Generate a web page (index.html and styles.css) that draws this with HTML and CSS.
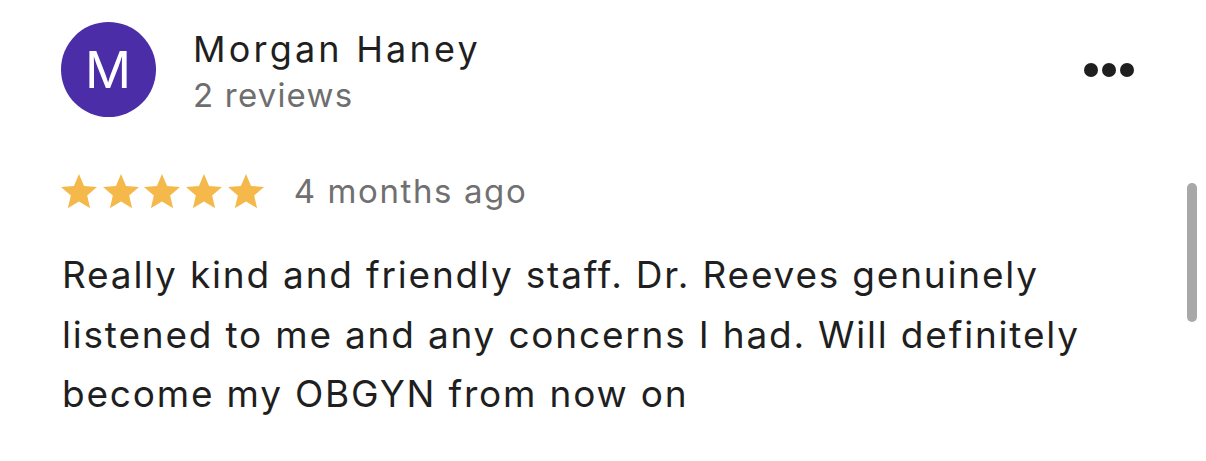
FILE: index.html
```html
<!DOCTYPE html>
<html lang="en">
<head>
  <meta charset="UTF-8" />
  <meta name="viewport" content="width=device-width, initial-scale=1.0"/>
  <title>Review</title>
  <link rel="stylesheet" href="styles.css">
</head>
<body>

  <div class="review">
    <div class="review-head">
      <div class="avatar">M</div>
      <div class="author">
        <div class="author-name">Morgan Haney</div>
        <div class="author-meta">2 reviews</div>
      </div>
      <button class="more" aria-label="More options">
        <span class="dot"></span>
        <span class="dot"></span>
        <span class="dot"></span>
      </button>
    </div>

    <div class="rating">
      <div class="stars">
        <svg class="star" viewBox="2 2 20 19"><path d="M12 17.27L18.18 21l-1.64-7.03L22 9.24l-7.19-.61L12 2 9.19 8.63 2 9.24l5.46 4.73L5.82 21z"/></svg>
        <svg class="star" viewBox="2 2 20 19"><path d="M12 17.27L18.18 21l-1.64-7.03L22 9.24l-7.19-.61L12 2 9.19 8.63 2 9.24l5.46 4.73L5.82 21z"/></svg>
        <svg class="star" viewBox="2 2 20 19"><path d="M12 17.27L18.18 21l-1.64-7.03L22 9.24l-7.19-.61L12 2 9.19 8.63 2 9.24l5.46 4.73L5.82 21z"/></svg>
        <svg class="star" viewBox="2 2 20 19"><path d="M12 17.27L18.18 21l-1.64-7.03L22 9.24l-7.19-.61L12 2 9.19 8.63 2 9.24l5.46 4.73L5.82 21z"/></svg>
        <svg class="star" viewBox="2 2 20 19"><path d="M12 17.27L18.18 21l-1.64-7.03L22 9.24l-7.19-.61L12 2 9.19 8.63 2 9.24l5.46 4.73L5.82 21z"/></svg>
      </div>
      <span class="date">4 months ago</span>
    </div>

    <p class="review-text">Really kind and friendly staff. Dr. Reeves genuinely listened to me and any concerns I had. Will definitely become my OBGYN from now on</p>

    <div class="scrollbar"></div>
  </div>

</body>
</html>
```

FILE: styles.css
```css
body {
  margin: 0px;
  padding: 0px;
  font-family: Inter, 'Liberation Sans', sans-serif;
  background: #ffffff;
  color: #1f1f1f;
}

.review {
  padding: 22px 72px 0 61px;
  height: 439px;
}

.review-head {
  display: flex;
  align-items: flex-start;
}

.avatar {
  width: 95px;
  height: 95px;
  border-radius: 50%;
  background: #4b2da7;
  color: #ffffff;
  font-size: 51px;
  letter-spacing: 1px;
  display: flex;
  align-items: center;
  justify-content: center;
  flex-shrink: 0;
}

.author {
  flex: 1;
  margin-left: 37px;
  padding-top: 5px;
}

.author-name {
  font-size: 36px;
  line-height: 44px;
  letter-spacing: 3.2px;
  color: #1f1f1f;
}

.author-meta {
  font-size: 33px;
  line-height: 48px;
  letter-spacing: 1.2px;
  color: #6e6e6e;
}

.more {
  display: flex;
  gap: 4px;
  margin-top: 41px;
  padding: 0;
  border: none;
  background: none;
  cursor: pointer;
}

.dot {
  width: 14px;
  height: 14px;
  border-radius: 50%;
  background: #1f1f1f;
}

.rating {
  display: flex;
  align-items: center;
  margin-top: 52px;
}

.stars {
  display: flex;
  gap: 5.7px;
}

.star {
  width: 36px;
  height: 34.2px;
  fill: #f4b94a;
}

.date {
  margin-left: 30px;
  font-size: 33px;
  line-height: 40px;
  letter-spacing: 1.6px;
  color: #707070;
}

.review-text {
  margin: 34px 0 0 1px;
  font-size: 37px;
  line-height: 59.5px;
  letter-spacing: 1.8px;
  color: #1f1f1f;
}

.scrollbar {
  position: absolute;
  top: 183px;
  right: 9px;
  width: 10px;
  height: 139px;
  border-radius: 5px;
  background: #a8a8a8;
}
```
